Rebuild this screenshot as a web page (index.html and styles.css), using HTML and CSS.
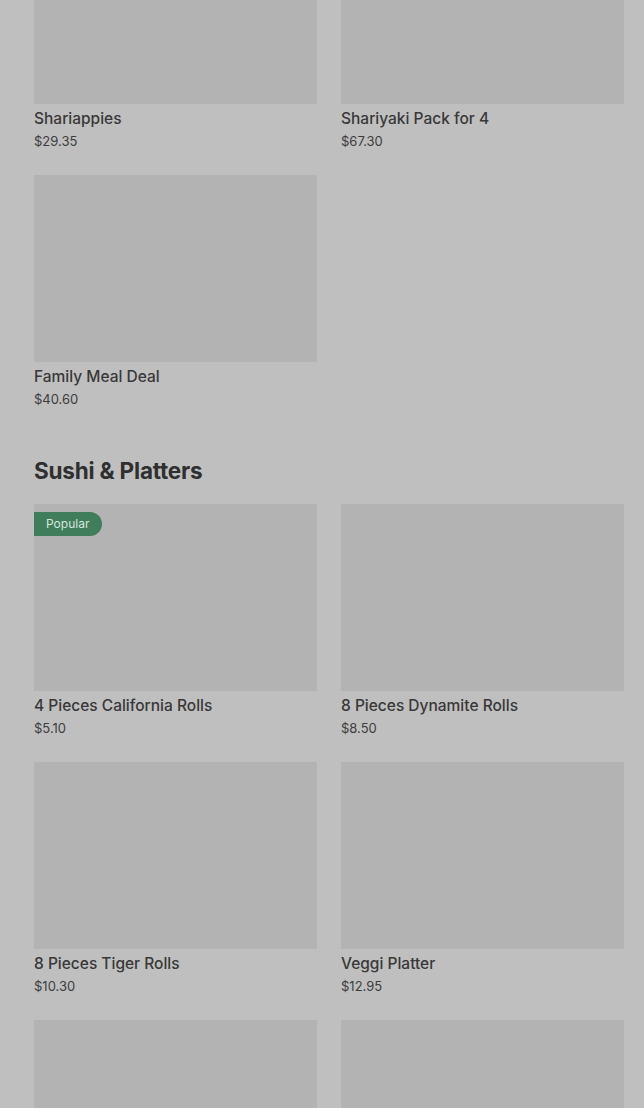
FILE: index.html
```html
<!DOCTYPE html>
<html lang="en">
<head>
    <meta charset="UTF-8">
    <meta name="viewport" content="width=device-width, initial-scale=1.0">
    <title>Menu</title>
    <link rel="stylesheet" href="styles.css">
</head>
<body>

    <main class="menu">
        <section class="menu-section first">
            <div class="item-grid">
                <div class="item">
                    <div class="item-img"></div>
                    <div class="item-name">Shariappies</div>
                    <div class="item-price">$29.35</div>
                </div>
                <div class="item">
                    <div class="item-img"></div>
                    <div class="item-name">Shariyaki Pack for 4</div>
                    <div class="item-price">$67.30</div>
                </div>
                <div class="item">
                    <div class="item-img"></div>
                    <div class="item-name">Family Meal Deal</div>
                    <div class="item-price">$40.60</div>
                </div>
            </div>
        </section>

        <section class="menu-section">
            <h2>Sushi &amp; Platters</h2>
            <div class="item-grid">
                <div class="item">
                    <div class="item-img">
                        <span class="badge">Popular</span>
                    </div>
                    <div class="item-name">4 Pieces California Rolls</div>
                    <div class="item-price">$5.10</div>
                </div>
                <div class="item">
                    <div class="item-img"></div>
                    <div class="item-name">8 Pieces Dynamite Rolls</div>
                    <div class="item-price">$8.50</div>
                </div>
                <div class="item">
                    <div class="item-img"></div>
                    <div class="item-name">8 Pieces Tiger Rolls</div>
                    <div class="item-price">$10.30</div>
                </div>
                <div class="item">
                    <div class="item-img"></div>
                    <div class="item-name">Veggi Platter</div>
                    <div class="item-price">$12.95</div>
                </div>
                <div class="item">
                    <div class="item-img"></div>
                    <div class="item-name"></div>
                    <div class="item-price"></div>
                </div>
                <div class="item">
                    <div class="item-img"></div>
                    <div class="item-name"></div>
                    <div class="item-price"></div>
                </div>
            </div>
        </section>
    </main>

</body>
</html>
```

FILE: styles.css
```css
body {
    font-family: Inter, 'Noto Sans', sans-serif;
    margin: 0;
    padding: 0;
    background-color: #bfbfbf;
    color: #353535;
    overflow: hidden;
}

.menu {
    padding: 0 20px 0 34px;
    margin-top: -83px;
}

.menu-section h2 {
    margin: 49px 0 19px;
    font-size: 22.5px;
    line-height: 28px;
    font-weight: 700;
    letter-spacing: -0.2px;
    color: #2f2f2f;
}

.item-grid {
    display: grid;
    grid-template-columns: 1fr 1fr;
    column-gap: 24px;
    row-gap: 25px;
}

.item-img {
    position: relative;
    height: 187px;
    background-color: #b3b3b3;
}

.item-name {
    margin-top: 5px;
    font-size: 15.5px;
    line-height: 20px;
    font-weight: 500;
    color: #383838;
}

.item-price {
    margin-top: 3px;
    font-size: 13px;
    line-height: 18px;
    color: #3d3d3d;
}

.badge {
    position: absolute;
    top: 8px;
    left: 0;
    height: 24px;
    padding: 0 13px 0 12px;
    background-color: #3f7d5b;
    color: #d6e6dc;
    font-size: 12px;
    line-height: 24px;
    border-radius: 0 12px 12px 0;
}
```
